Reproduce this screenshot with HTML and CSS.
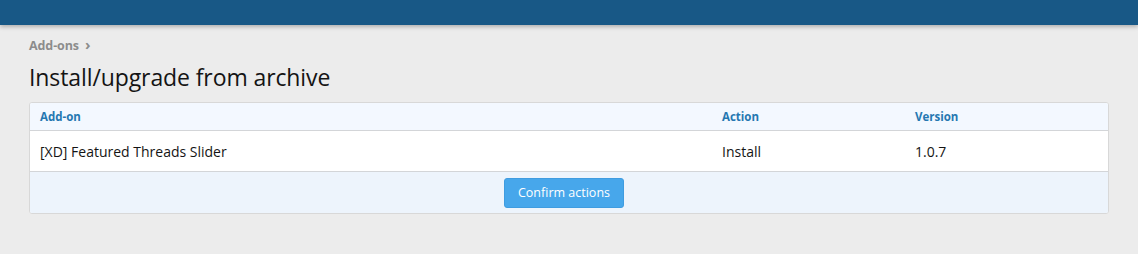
FILE: index.html
```html
<!DOCTYPE html>
<html>
<head>
<meta charset="utf-8">
<link rel="stylesheet" href="styles.css">
</head>
<body>
<header class="topbar"></header>
<main class="page">
  <nav class="crumbs"><a class="crumb" href="#">Add-ons</a><span class="chev">&#8250;</span></nav>
  <h1 class="title">Install/upgrade from archive</h1>
  <div class="block">
    <div class="row head">
      <div class="c1">Add-on</div>
      <div class="c2">Action</div>
      <div class="c3">Version</div>
    </div>
    <div class="row body">
      <div class="c1">[XD] Featured Threads Slider</div>
      <div class="c2">Install</div>
      <div class="c3">1.0.7</div>
    </div>
    <div class="foot">
      <button class="btn">Confirm actions</button>
    </div>
  </div>
</main>
</body>
</html>
```
FILE: styles.css
```css
* { box-sizing: border-box; }
html, body { margin: 0; padding: 0; }
body {
  background: #ececec;
  font-family: "Open Sans", "Noto Sans", sans-serif;
  color: #141414;
  height: 254px;
  overflow: hidden;
}
.topbar {
  height: 25px;
  background: #185886;
  box-shadow: 0 2px 4px rgba(0,0,0,0.25);
}
.page { padding: 11px 29px 0 29px; }
.crumbs {
  font-size: 12.5px;
  font-weight: 700;
  color: #8c8c8c;
  height: 18px;
  display: flex;
  align-items: center;
  gap: 6px;
}
.crumb { color: #8c8c8c; text-decoration: none; letter-spacing: -0.1px; }
.chev { font-size: 15px; font-weight: 700; position: relative; top: -1px; }
.title {
  margin: 7px 0 0 0;
  font-size: 23px;
  font-weight: 400;
  line-height: 32px;
  height: 41px;
  letter-spacing: -0.1px;
}
.block {
  border: 1px solid #d8d8d8;
  border-radius: 3px;
  background: #fff;
  overflow: hidden;
}
.row { display: grid; grid-template-columns: 682px 193px 1fr; align-items: center; padding-left: 10px; }
.row.head {
  height: 28px;
  background: #f3f8ff;
  border-bottom: 1px solid #d3d5d8;
  font-size: 11.5px;
  font-weight: 700;
  color: #2577b1;
}
.row.body {
  height: 41px;
  border-bottom: 1px solid #d3d5d8;
  font-size: 14px;
}
.foot {
  height: 41px;
  background: #edf4fc;
  display: flex;
  justify-content: center;
  align-items: center;
  padding-right: 10px;
}
.btn {
  font-family: inherit;
  font-size: 12.5px;
  color: #fff;
  background: #47a7eb;
  border: 1px solid #3f9ce0;
  border-radius: 3px;
  width: 120px;
  height: 30px;
  padding: 0;
}
```
